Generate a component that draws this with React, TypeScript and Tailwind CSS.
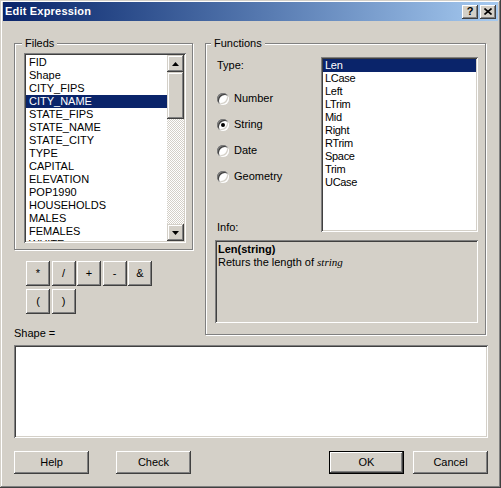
import React from "react";

const fields = [
  "FID",
  "Shape",
  "CITY_FIPS",
  "CITY_NAME",
  "STATE_FIPS",
  "STATE_NAME",
  "STATE_CITY",
  "TYPE",
  "CAPITAL",
  "ELEVATION",
  "POP1990",
  "HOUSEHOLDS",
  "MALES",
  "FEMALES",
  "WHITE",
];

const funcs = ["Len", "LCase", "Left", "LTrim", "Mid", "Right", "RTrim", "Space", "Trim", "UCase"];

function Radio({ label, checked, className }: { label: string; checked?: boolean; className?: string }) {
  return (
    <div className={`flex items-center h-[13px] ml-[2px] ${className ?? ""}`}>
      <div className="w-[12px] h-[12px] rounded-full bg-white shadow-[inset_1px_1px_#808080,inset_-1px_-1px_#ffffff,inset_2px_2px_#404040,inset_-2px_-2px_#d4d0c8] flex items-center justify-center">
        {checked && <div className="w-[4px] h-[4px] rounded-full bg-black" />}
      </div>
      <span className="ml-[5px]">{label}</span>
    </div>
  );
}

function OpButton({ label }: { label: string }) {
  return (
    <div className="w-[24px] h-[25px] flex items-center justify-center bg-[#d4d0c8] shadow-[inset_-1px_-1px_#404040,inset_1px_1px_#ffffff,inset_-2px_-2px_#808080,inset_2px_2px_#d4d0c8]">
      {label}
    </div>
  );
}

function DlgButton({ label, isDefault }: { label: string; isDefault?: boolean }) {
  return (
    <div
      className={`w-[75px] h-[23px] flex items-center justify-center bg-[#d4d0c8] shadow-[inset_-1px_-1px_#404040,inset_1px_1px_#ffffff,inset_-2px_-2px_#808080,inset_2px_2px_#d4d0c8] ${
        isDefault ? "border border-black" : ""
      }`}
    >
      {label}
    </div>
  );
}

function ScrollBtn({ up }: { up?: boolean }) {
  return (
    <div className="w-[17px] h-[17px] flex items-center justify-center bg-[#d4d0c8] shadow-[inset_-1px_-1px_#404040,inset_1px_1px_#d4d0c8,inset_-2px_-2px_#808080,inset_2px_2px_#ffffff]">
      <svg width="7" height="4" viewBox="0 0 7 4">
        {up ? <polygon points="3.5,0 7,4 0,4" fill="#000" /> : <polygon points="0,0 7,0 3.5,4" fill="#000" />}
      </svg>
    </div>
  );
}

export default function App() {
  return (
    <div className="w-[501px] h-[488px] overflow-hidden bg-[#d4d0c8] font-['Liberation_Sans',Arial,sans-serif] text-[11px] leading-[13px] text-black pt-[2px] px-[3px] shadow-[inset_-1px_-1px_#404040,inset_1px_1px_#d4d0c8,inset_-2px_-2px_#808080,inset_2px_2px_#ffffff]">
      {/* Title bar */}
      <div className="h-[19px] flex items-center justify-between pl-[2px] pr-[2px] bg-gradient-to-r from-[#0a246a] to-[#a6caf0]">
        <span className="text-white font-bold text-[11px] tracking-[0.2px]">Edit Expression</span>
        <div className="flex gap-[2px]">
          <div className="w-[16px] h-[14px] flex items-center justify-center bg-[#d4d0c8] font-bold text-[11px] shadow-[inset_-1px_-1px_#404040,inset_1px_1px_#ffffff,inset_-2px_-2px_#808080,inset_2px_2px_#d4d0c8]">
            ?
          </div>
          <div className="w-[16px] h-[14px] flex items-center justify-center bg-[#d4d0c8] shadow-[inset_-1px_-1px_#404040,inset_1px_1px_#ffffff,inset_-2px_-2px_#808080,inset_2px_2px_#d4d0c8]">
            <svg width="8" height="7" viewBox="0 0 8 7">
              <path d="M0.5 0.5 L7.5 6.5 M7.5 0.5 L0.5 6.5" stroke="#000" strokeWidth="1.6" />
            </svg>
          </div>
        </div>
      </div>

      {/* Content */}
      <div className="ml-[11px] mt-[22px] w-[474px]">
        <div className="flex items-start">
          {/* Left column */}
          <div className="w-[179px] flex flex-col">
            <div className="relative w-[179px] h-[207px] border border-[#808080] shadow-[inset_1px_1px_#ffffff,1px_1px_#ffffff] pl-[9px] pt-[9px]">
              <span className="absolute top-[-7px] left-[7px] px-[3px] bg-[#d4d0c8]">Fileds</span>
              <div className="w-[162px] h-[190px] bg-white p-[2px] flex shadow-[inset_1px_1px_#808080,inset_-1px_-1px_#ffffff,inset_2px_2px_#404040,inset_-2px_-2px_#d4d0c8]">
                <div className="flex-1 overflow-hidden pt-[1px]">
                  {fields.map((f) => (
                    <div
                      key={f}
                      className={`h-[13px] pl-[3px] whitespace-nowrap ${f === "CITY_NAME" ? "bg-[#0a246a] text-white" : ""}`}
                    >
                      {f}
                    </div>
                  ))}
                </div>
                <div className="w-[17px] flex flex-col">
                  <ScrollBtn up />
                  <div className="h-[47px] bg-[#d4d0c8] shadow-[inset_-1px_-1px_#404040,inset_1px_1px_#d4d0c8,inset_-2px_-2px_#808080,inset_2px_2px_#ffffff]" />
                  <div className="flex-1 bg-[repeating-conic-gradient(#ffffff_0%_25%,#d4d0c8_0%_50%)] bg-[length:2px_2px]" />
                  <ScrollBtn />
                </div>
              </div>
            </div>

            <div className="ml-[12px] mt-[11px] flex flex-col gap-[3px]">
              <div className="flex gap-[1.5px]">
                <OpButton label="*" />
                <OpButton label="/" />
                <OpButton label="+" />
                <OpButton label="-" />
                <OpButton label="&" />
              </div>
              <div className="flex gap-[1.5px]">
                <OpButton label="(" />
                <OpButton label=")" />
              </div>
            </div>

            <div className="mt-[13px] h-[13px]">Shape =</div>
          </div>

          {/* Functions group */}
          <div className="relative ml-[12px] w-[281px] h-[292px] border border-[#808080] shadow-[inset_1px_1px_#ffffff,1px_1px_#ffffff] pl-[9px] pt-[13px]">
            <span className="absolute top-[-7px] left-[5px] px-[3px] bg-[#d4d0c8]">Functions</span>
            <div className="flex items-start">
              <div className="w-[106px] flex flex-col">
                <div className="mt-[2px] ml-[2px] h-[13px]">Type:</div>
                <Radio label="Number" className="mt-[20px]" />
                <Radio label="String" checked className="mt-[13px]" />
                <Radio label="Date" className="mt-[13px]" />
                <Radio label="Geometry" className="mt-[13px]" />
                <div className="mt-[38px] ml-[2px] h-[13px]">Info:</div>
              </div>
              <div className="w-[157px] h-[175px] bg-white p-[2px] shadow-[inset_1px_1px_#808080,inset_-1px_-1px_#ffffff,inset_2px_2px_#404040,inset_-2px_-2px_#d4d0c8]">
                {funcs.map((f) => (
                  <div
                    key={f}
                    className={`h-[13px] pl-[2px] tracking-[-0.3px] ${f === "Len" ? "bg-[#0a246a] text-white" : ""}`}
                  >
                    {f}
                  </div>
                ))}
              </div>
            </div>
            <div className="mt-[6px] w-[263px] h-[83px] p-[3px] shadow-[inset_1px_1px_#808080,inset_-1px_-1px_#ffffff,inset_2px_2px_#404040,inset_-2px_-2px_#d4d0c8]">
              <div className="font-bold">Len(string)</div>
              <div>
                Returs the length of <i className="font-['Liberation_Serif',serif]">string</i>
              </div>
            </div>
          </div>
        </div>

        {/* Expression box */}
        <div className="mt-[5px] w-[474px] h-[93px] bg-white shadow-[inset_1px_1px_#808080,inset_-1px_-1px_#ffffff,inset_2px_2px_#404040,inset_-2px_-2px_#d4d0c8]" />

        {/* Buttons */}
        <div className="mt-[13px] flex">
          <DlgButton label="Help" />
          <div className="ml-[27px]">
            <DlgButton label="Check" />
          </div>
          <div className="ml-auto flex gap-[9px]">
            <DlgButton label="OK" isDefault />
            <DlgButton label="Cancel" />
          </div>
        </div>
      </div>
    </div>
  );
}
